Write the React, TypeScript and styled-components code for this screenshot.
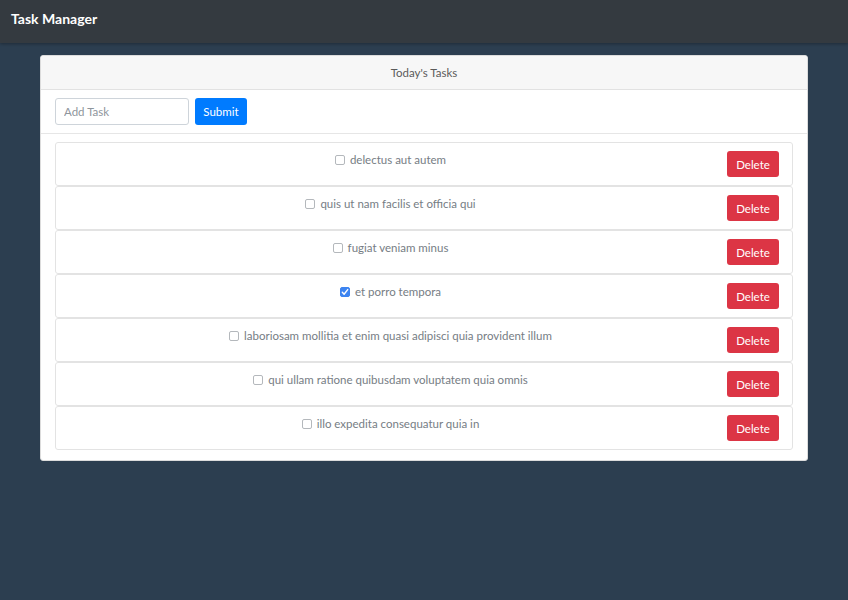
import React, { useState } from 'react';
import styled, { createGlobalStyle } from 'styled-components';

interface Task {
  id: number;
  title: string;
  completed: boolean;
}

const initialTasks: Task[] = [
  { id: 1, title: 'delectus aut autem', completed: false },
  { id: 2, title: 'quis ut nam facilis et officia qui', completed: false },
  { id: 3, title: 'fugiat veniam minus', completed: false },
  { id: 4, title: 'et porro tempora', completed: true },
  {
    id: 5,
    title: 'laboriosam mollitia et enim quasi adipisci quia provident illum',
    completed: false,
  },
  { id: 6, title: 'qui ullam ratione quibusdam voluptatem quia omnis', completed: false },
  { id: 7, title: 'illo expedita consequatur quia in', completed: false },
];

const checkMark =
  "url(\"data:image/svg+xml,%3Csvg xmlns='http://www.w3.org/2000/svg' viewBox='0 0 10 10'%3E%3Cpath d='M2.3 5.3l1.8 1.9 3.6-4.6' fill='none' stroke='white' stroke-width='1.4' stroke-linecap='round' stroke-linejoin='round'/%3E%3C/svg%3E\")";

const GlobalStyle = createGlobalStyle`
  body {
    margin: 0;
    background: #2c3e50;
    font-family: 'Lato', 'Noto Sans', sans-serif;
  }
`;

const StylePage = styled.div`
  min-height: 100vh;
  background: #2c3e50;
`;

const StyleNavbar = styled.nav`
  height: 43px;
  padding: 0 11px;
  display: flex;
  align-items: center;
  background: #343a40;
  box-shadow: 0px 1px 3px rgba(0, 0, 0, 0.3);
`;

const StyleBrand = styled.span`
  margin-top: -6px;
  font-size: 14px;
  font-weight: 700;
  color: #ffffff;
`;

const StyleContainer = styled.main`
  padding: 12px 40px;
`;

const StyleCard = styled.section`
  background: #ffffff;
  border: 1px solid #dcdcdc;
  border-radius: 3px;
  overflow: hidden;
`;

const StyleCardHeader = styled.header`
  height: 33px;
  display: flex;
  justify-content: center;
  align-items: center;
  background: #f7f7f7;
  border-bottom: 1px solid #e2e2e2;
  font-size: 11.5px;
  color: #5a5a5a;
`;

const StyleForm = styled.form`
  height: 43px;
  padding: 0 14px;
  display: flex;
  align-items: center;
  gap: 6px;
  border-bottom: 1px solid #e6e6e6;
`;

const StyleInput = styled.input`
  box-sizing: border-box;
  width: 134px;
  height: 27px;
  padding: 0 8px;
  border: 1px solid #ced4da;
  border-radius: 3px;
  font-family: inherit;
  font-size: 11.5px;
  color: #495057;

  &::placeholder {
    color: #8e959c;
  }
`;

const StyleButton = styled.button<{ $variant: 'primary' | 'danger' }>`
  box-sizing: border-box;
  width: 52px;
  height: ${(p) => (p.$variant === 'primary' ? '27px' : '26px')};
  padding: 0;
  border: none;
  border-radius: 3px;
  background: ${(p) => (p.$variant === 'primary' ? '#007bff' : '#dc3545')};
  color: #ffffff;
  font-family: inherit;
  font-size: 11.5px;
  cursor: pointer;
`;

const StyleList = styled.ul`
  margin: 0;
  padding: 8px 14px 10px;
  list-style: none;
`;

const StyleItem = styled.li`
  box-sizing: border-box;
  height: 44px;
  padding-right: 13px;
  display: flex;
  align-items: center;
  border: 1px solid #e3e3e3;
  border-radius: 3px;
`;

const StyleLabel = styled.label`
  flex: 1;
  align-self: flex-start;
  padding-top: 10px;
  display: flex;
  justify-content: center;
  align-items: center;
  gap: 5px;
  font-size: 11.5px;
  color: #767d84;
`;

const StyleCheckbox = styled.input`
  appearance: none;
  box-sizing: border-box;
  width: 10px;
  height: 10px;
  margin: 1px 0 0 0;
  border: 1px solid #b4b8bc;
  border-radius: 2px;
  background: #ffffff;

  &:checked {
    border-color: #3d84f0;
    background: #3d84f0 ${checkMark} center / 10px 10px no-repeat;
  }
`;

const StyleSpacer = styled.span`
  width: 2px;
`;

export default function App() {
  const [tasks, setTasks] = useState<Task[]>(initialTasks);
  const [text, setText] = useState('');

  const toggle = (id: number) => {
    setTasks(tasks.map((t) => (t.id === id ? { ...t, completed: !t.completed } : t)));
  };

  const remove = (id: number) => {
    setTasks(tasks.filter((t) => t.id !== id));
  };

  const submit = (e: React.FormEvent) => {
    e.preventDefault();
    if (!text.trim()) return;
    setTasks([...tasks, { id: Date.now(), title: text, completed: false }]);
    setText('');
  };

  return (
    <StylePage>
      <GlobalStyle />
      <StyleNavbar>
        <StyleBrand>Task Manager</StyleBrand>
      </StyleNavbar>
      <StyleContainer>
        <StyleCard>
          <StyleCardHeader>Today's Tasks</StyleCardHeader>
          <StyleForm onSubmit={submit}>
            <StyleInput
              placeholder="Add Task"
              value={text}
              onChange={(e) => setText(e.target.value)}
            />
            <StyleButton $variant="primary" type="submit">
              Submit
            </StyleButton>
          </StyleForm>
          <StyleList>
            {tasks.map((task) => (
              <StyleItem key={task.id}>
                <StyleLabel>
                  <StyleCheckbox
                    type="checkbox"
                    checked={task.completed}
                    onChange={() => toggle(task.id)}
                  />
                  {task.title}
                </StyleLabel>
                <StyleSpacer />
                <StyleButton $variant="danger" type="button" onClick={() => remove(task.id)}>
                  Delete
                </StyleButton>
              </StyleItem>
            ))}
          </StyleList>
        </StyleCard>
      </StyleContainer>
    </StylePage>
  );
}
